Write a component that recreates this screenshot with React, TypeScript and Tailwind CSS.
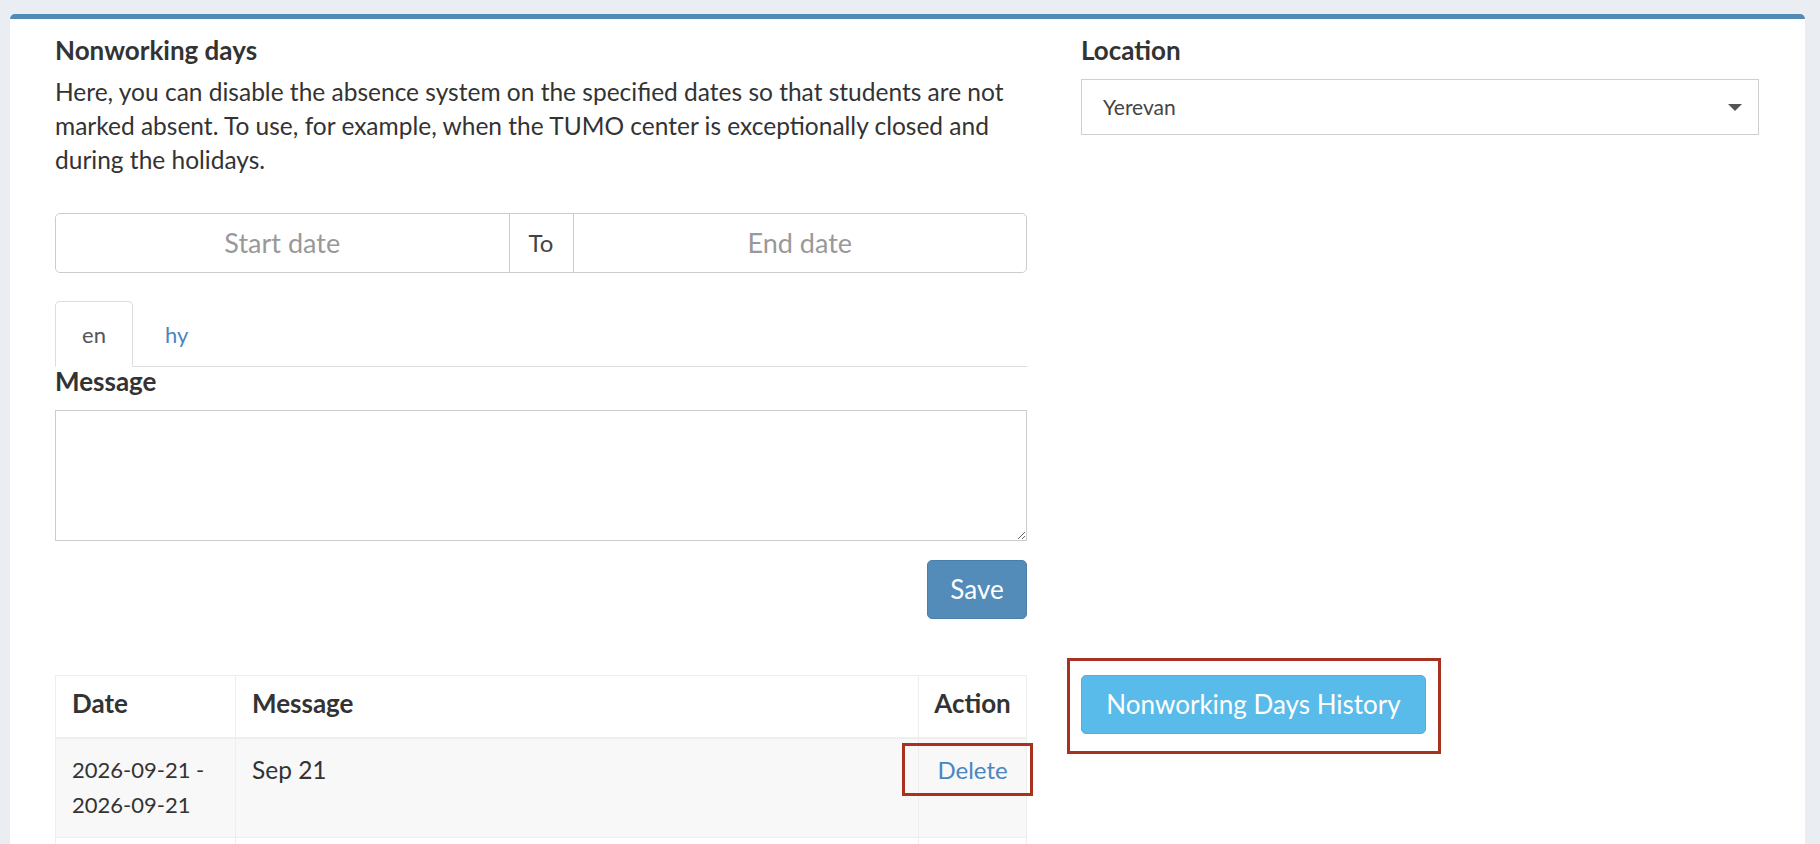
import React from "react";

type Row = { from: string; to: string; message: string };

const rows: Row[] = [
  { from: "2026-09-21", to: "2026-09-21", message: "Sep 21" },
  { from: "2026-12-31", to: "2027-01-07", message: "New Year holidays" },
];

function CaretDown() {
  return (
    <svg width="14" height="7" viewBox="0 0 14 7" className="shrink-0">
      <polygon points="0,0 14,0 7,7" fill="#555" />
    </svg>
  );
}

export default function App() {
  return (
    <div className="min-h-screen bg-[#eaeef3] pt-[14px] pl-[10px] pr-[15px] font-[Lato,sans-serif] text-[#333]">
      <div className="rounded-t-[5px] border-t-[5px] border-[#528bb8] bg-white px-[45px] pt-[16px] pb-10">
        {/* Form + location */}
        <div className="flex gap-[54px]">
          <div className="w-[972px] shrink-0">
            <h3 className="text-[26px] font-bold leading-[30px]">Nonworking days</h3>
            <p className="mt-[10px] text-[24.5px] leading-[34px]">
              Here, you can disable the absence system on the specified dates so that students are not
              marked absent. To use, for example, when the TUMO center is exceptionally closed and
              during the holidays.
            </p>

            <div className="mt-[36px] flex h-[60px] rounded-[5px] border border-[#ccc]">
              <input
                placeholder="Start date"
                className="min-w-0 flex-1 rounded-l-[5px] bg-white text-center text-[27px] outline-none placeholder:text-[#999]"
              />
              <span className="flex w-[65px] items-center justify-center border-x border-[#ccc] text-[24px] text-[#444]">
                To
              </span>
              <input
                placeholder="End date"
                className="min-w-0 flex-1 rounded-r-[5px] bg-white text-center text-[27px] outline-none placeholder:text-[#999]"
              />
            </div>

            <div className="mt-[28px] flex border-b border-[#ddd]">
              <button className="-mb-px h-[66px] w-[78px] rounded-t-[5px] border border-b-white border-[#ddd] bg-white text-[22px] text-[#555]">
                en
              </button>
              <button className="-mb-px ml-[2px] h-[66px] px-[30px] text-[22px] text-[#4a86c0]">hy</button>
            </div>

            <label className="block text-[26px] font-bold leading-[28px]">Message</label>
            <textarea className="mt-[15px] block h-[131px] w-full border border-[#ccc] px-3 py-2 text-[22px] outline-none" />

            <div className="mt-[19px] flex justify-end">
              <button className="h-[59px] w-[100px] rounded-[5px] border border-[#4a7fab] bg-[#538bb9] text-[26px] text-white">
                Save
              </button>
            </div>
          </div>

          <div className="w-[678px] shrink-0">
            <h3 className="text-[26px] font-bold leading-[30px]">Location</h3>
            <div className="mt-[14px] flex h-[56px] items-center justify-between border border-[#d0d0d0] pl-[21px] pr-[16px]">
              <span className="text-[21px] text-[#444]">Yerevan</span>
              <CaretDown />
            </div>
          </div>
        </div>

        {/* Table + history */}
        <div className="mt-[56px] flex gap-[54px]">
          <div className="w-[972px] shrink-0">
            <table className="w-full table-fixed border-collapse border border-[#eee] text-[24.5px] leading-[35px]">
              <thead>
                <tr>
                  <th className="w-[180px] border-x border-b-2 border-[#eee] px-4 pt-[10px] pb-[16px] text-left text-[26px] font-bold">
                    Date
                  </th>
                  <th className="border-x border-b-2 border-[#eee] px-4 pt-[10px] pb-[16px] text-left text-[26px] font-bold">
                    Message
                  </th>
                  <th className="w-[108px] border-x border-b-2 border-[#eee] px-3 pt-[10px] pb-[16px] text-center text-[26px] font-bold">
                    Action
                  </th>
                </tr>
              </thead>
              <tbody>
                {rows.map((r, i) => (
                  <tr key={r.from + r.message} className={i % 2 === 0 ? "bg-[#f8f8f8]" : "bg-white"}>
                    <td className="border border-[#eee] px-4 pt-[13px] pb-[15px] align-top text-[22px] whitespace-nowrap">
                      {r.from} -<br />
                      {r.to}
                    </td>
                    <td className="border border-[#eee] px-4 pt-[13px] pb-[15px] align-top">{r.message}</td>
                    <td className="relative border border-[#eee] px-3 pt-[13px] pb-[15px] text-center align-top">
                      <a className="text-[24px] text-[#4a86c0]">Delete</a>
                      {i === 0 && (
                        <span className="pointer-events-none absolute top-[4px] left-[-17px] h-[53px] w-[131px] border-[3px] border-[#a8321f]" />
                      )}
                    </td>
                  </tr>
                ))}
              </tbody>
            </table>
          </div>

          <div className="w-[678px] shrink-0">
            <div className="relative inline-block">
              <button className="h-[59px] w-[345px] rounded-[5px] border border-[#4fb0dc] bg-[#59bbe9] text-[26px] text-white">
                Nonworking Days History
              </button>
              <span className="pointer-events-none absolute top-[-17px] left-[-14px] h-[96px] w-[374px] border-[3px] border-[#a8321f]" />
            </div>
          </div>
        </div>
      </div>
    </div>
  );
}
